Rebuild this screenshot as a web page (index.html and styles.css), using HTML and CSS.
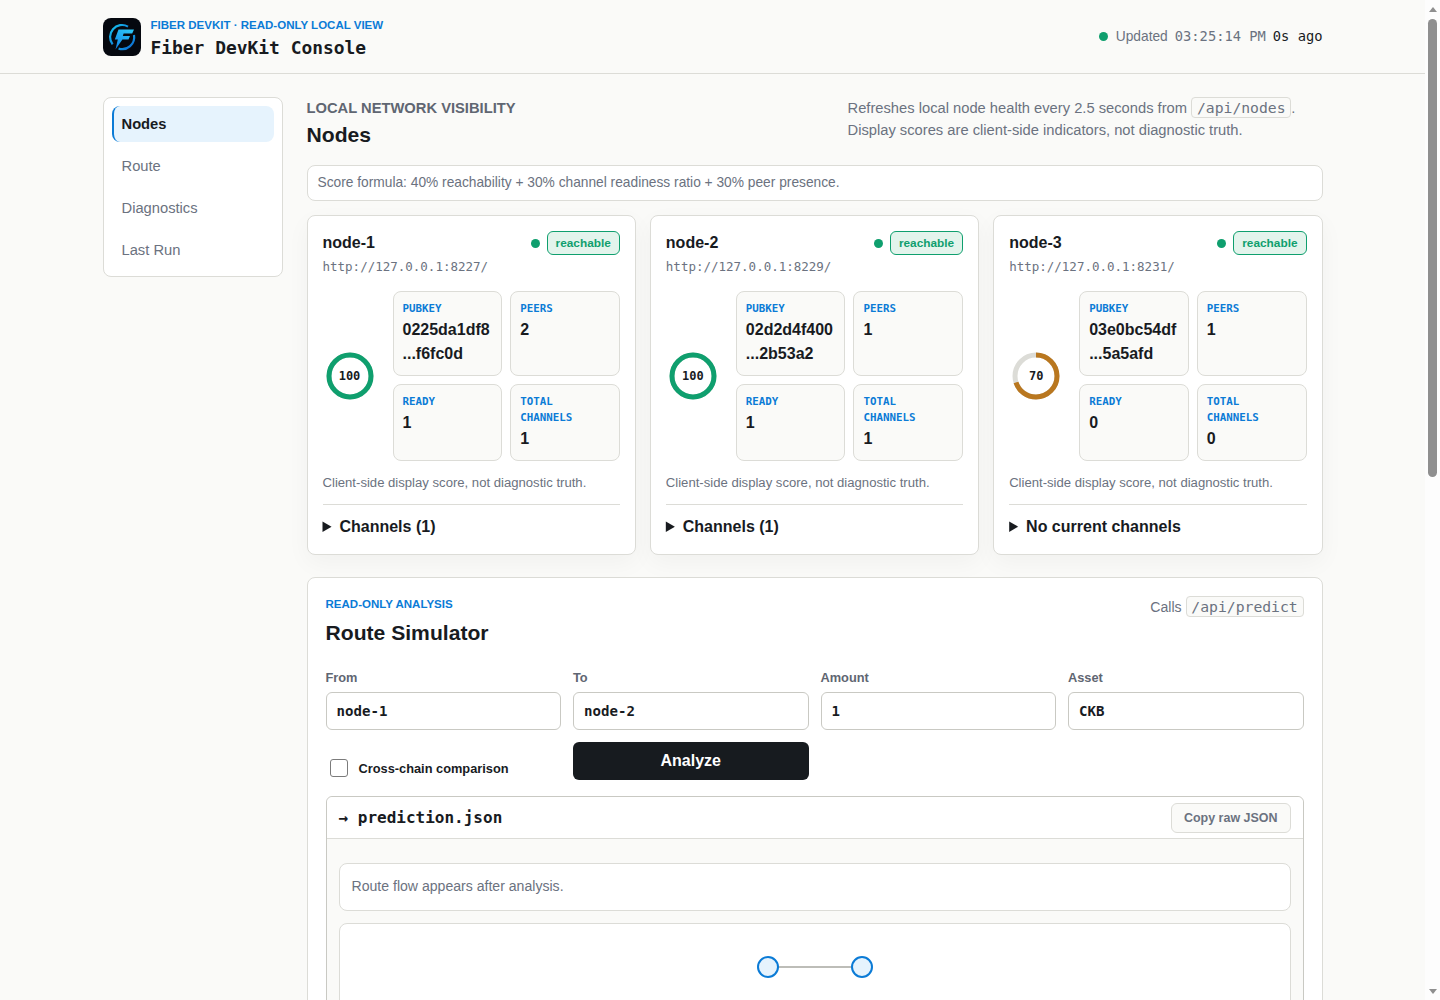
FILE: index.html
```html
<!doctype html>
<html lang="en">
<head>
	<meta charset="utf-8">
	<meta name="viewport" content="width=device-width, initial-scale=1.0"/>
	<title>Fiber DevKit Console</title>
	<link rel="stylesheet" href="styles.css">
</head>
<body>

	<header class="topbar">
		<div class="topbar-inner">
			<div class="brand">
				<svg class="logo" viewBox="0 0 38 38" aria-hidden="true">
					<defs>
						<linearGradient id="ringGrad" x1="0" y1="0" x2="1" y2="1">
							<stop offset="0" stop-color="#18c8f0"/>
							<stop offset="1" stop-color="#0a5fd0"/>
						</linearGradient>
						<linearGradient id="boltGrad" x1="0.7" y1="0" x2="0.2" y2="1">
							<stop offset="0" stop-color="#2cc4f6"/>
							<stop offset="1" stop-color="#0f86ea"/>
						</linearGradient>
					</defs>
					<rect width="38" height="38" rx="8" fill="#05080f"/>
					<path d="M25 8.6A12 12 0 0 0 9.6 26.4" fill="none" stroke="url(#ringGrad)" stroke-width="2.2"/>
					<path d="M31 17A12 12 0 0 1 15.6 30.6" fill="none" stroke="url(#ringGrad)" stroke-width="2.2"/>
					<path d="M15.5 11.5H31L29.2 15.6H20.6L19.8 18H27L25.5 21.5H19.4L12.5 31.5L14.8 21.5H11.8Z" fill="url(#boltGrad)"/>
				</svg>
				<div class="brand-text">
					<div class="eyebrow">Fiber DevKit · Read-only local view</div>
					<div class="brand-title">Fiber DevKit Console</div>
				</div>
			</div>
			<div class="status">
				<span class="dot"></span>
				<span class="status-text">Updated</span>
				<span class="mono status-text">03:25:14 PM</span>
				<span class="mono status-ago">0s ago</span>
			</div>
		</div>
	</header>

	<div class="layout">
		<nav class="sidebar">
			<a class="nav-item active">Nodes</a>
			<a class="nav-item">Route</a>
			<a class="nav-item">Diagnostics</a>
			<a class="nav-item">Last Run</a>
		</nav>

		<main class="content">
			<section class="section-head">
				<div>
					<div class="kicker">Local network visibility</div>
					<h1>Nodes</h1>
				</div>
				<p class="section-desc">Refreshes local node health every 2.5 seconds from <code>/api/nodes</code>.<br>Display scores are client-side indicators, not diagnostic truth.</p>
			</section>

			<div class="formula">Score formula: 40% reachability + 30% channel readiness ratio + 30% peer presence.</div>

			<div class="cards">
				<article class="card">
					<div class="card-head">
						<h2>node-1</h2>
						<div class="card-state"><span class="dot"></span><span class="badge">reachable</span></div>
					</div>
					<div class="url">http://127.0.0.1:8227/</div>
					<div class="card-body">
						<div class="gauge">
							<svg viewBox="0 0 48 48"><circle class="gauge-track" cx="24" cy="24" r="21"/><circle class="gauge-bar" cx="24" cy="24" r="21" pathLength="100" stroke-dasharray="100 100"/></svg>
							<span>100</span>
						</div>
						<div class="stats">
							<div class="stat"><div class="stat-label">PUBKEY</div><div class="stat-value">0225da1df8 ...f6fc0d</div></div>
							<div class="stat"><div class="stat-label">PEERS</div><div class="stat-value">2</div></div>
							<div class="stat"><div class="stat-label">READY</div><div class="stat-value">1</div></div>
							<div class="stat"><div class="stat-label">TOTAL CHANNELS</div><div class="stat-value">1</div></div>
						</div>
					</div>
					<p class="note">Client-side display score, not diagnostic truth.</p>
					<details class="channels"><summary>Channels (1)</summary></details>
				</article>

				<article class="card">
					<div class="card-head">
						<h2>node-2</h2>
						<div class="card-state"><span class="dot"></span><span class="badge">reachable</span></div>
					</div>
					<div class="url">http://127.0.0.1:8229/</div>
					<div class="card-body">
						<div class="gauge">
							<svg viewBox="0 0 48 48"><circle class="gauge-track" cx="24" cy="24" r="21"/><circle class="gauge-bar" cx="24" cy="24" r="21" pathLength="100" stroke-dasharray="100 100"/></svg>
							<span>100</span>
						</div>
						<div class="stats">
							<div class="stat"><div class="stat-label">PUBKEY</div><div class="stat-value">02d2d4f400 ...2b53a2</div></div>
							<div class="stat"><div class="stat-label">PEERS</div><div class="stat-value">1</div></div>
							<div class="stat"><div class="stat-label">READY</div><div class="stat-value">1</div></div>
							<div class="stat"><div class="stat-label">TOTAL CHANNELS</div><div class="stat-value">1</div></div>
						</div>
					</div>
					<p class="note">Client-side display score, not diagnostic truth.</p>
					<details class="channels"><summary>Channels (1)</summary></details>
				</article>

				<article class="card">
					<div class="card-head">
						<h2>node-3</h2>
						<div class="card-state"><span class="dot"></span><span class="badge">reachable</span></div>
					</div>
					<div class="url">http://127.0.0.1:8231/</div>
					<div class="card-body">
						<div class="gauge">
							<svg viewBox="0 0 48 48"><circle class="gauge-track" cx="24" cy="24" r="21"/><circle class="gauge-bar warn" cx="24" cy="24" r="21" pathLength="100" stroke-dasharray="70 100"/></svg>
							<span>70</span>
						</div>
						<div class="stats">
							<div class="stat"><div class="stat-label">PUBKEY</div><div class="stat-value">03e0bc54df ...5a5afd</div></div>
							<div class="stat"><div class="stat-label">PEERS</div><div class="stat-value">1</div></div>
							<div class="stat"><div class="stat-label">READY</div><div class="stat-value">0</div></div>
							<div class="stat"><div class="stat-label">TOTAL CHANNELS</div><div class="stat-value">0</div></div>
						</div>
					</div>
					<p class="note">Client-side display score, not diagnostic truth.</p>
					<details class="channels"><summary>No current channels</summary></details>
				</article>
			</div>

			<section class="panel">
				<div class="panel-head">
					<div>
						<div class="panel-kicker">Read-only analysis</div>
						<h2>Route Simulator</h2>
					</div>
					<div class="panel-calls">Calls <code>/api/predict</code></div>
				</div>

				<div class="form-grid">
					<label class="field"><span>From</span><input type="text" value="node-1"></label>
					<label class="field"><span>To</span><input type="text" value="node-2"></label>
					<label class="field"><span>Amount</span><input type="text" value="1"></label>
					<label class="field"><span>Asset</span><input type="text" value="CKB"></label>
					<label class="check"><input type="checkbox"><span>Cross-chain comparison</span></label>
					<button class="analyze" type="button">Analyze</button>
				</div>

				<div class="result">
					<div class="result-head">
						<div class="result-title">→ prediction.json</div>
						<button class="copy" type="button">Copy raw JSON</button>
					</div>
					<div class="result-body">
						<div class="flow-note">Route flow appears after analysis.</div>
						<div class="flow">
							<svg class="flow-graph" viewBox="0 0 116 24" aria-hidden="true">
								<line x1="20" y1="12" x2="96" y2="12"/>
								<circle cx="11" cy="12" r="10"/>
								<circle cx="105" cy="12" r="10"/>
							</svg>
						</div>
					</div>
				</div>
			</section>
		</main>
	</div>

	<!-- the window's scrollbar, which the headless browser leaves out -->
	<div class="scrollbar" aria-hidden="true">
		<span class="scroll-up"></span>
		<span class="scroll-thumb"></span>
		<span class="scroll-down"></span>
	</div>

</body>
</html>
```

FILE: styles.css
```css
/*----- Reset -----*/

*{
	box-sizing: border-box;
}

html, body{
	padding: 0;
	margin: 0;
}

body{
	padding-right: 15px;
	background: #fafaf8;
	color: #181b1f;
	font-family: "Liberation Sans", Arial, sans-serif;
	font-size: 14.72px;
}

h1, h2, p{
	margin: 0;
}

code, .mono{
	font-family: "DejaVu Sans Mono", monospace;
}

code{
	font-size: 14.72px;
	padding: 1px 4.8px;
	background: #fafaf8;
	border: 1px solid #dcdcd7;
	border-radius: 4px;
}

.dot{
	display: inline-block;
	width: 9px;
	height: 9px;
	border-radius: 50%;
	background: #0f9f6e;
}

/*----- Scrollbar -----*/

.scrollbar{
	display: flex;
	flex-direction: column;
	align-items: center;
	position: fixed;
	top: 0;
	right: 0;
	bottom: 0;
	width: 15px;
	padding: 7px 0 6px;
	background: #fdfdfd;
}

.scroll-up, .scroll-down{
	width: 0;
	height: 0;
	border-left: 4.5px solid transparent;
	border-right: 4.5px solid transparent;
}

.scroll-up{
	border-bottom: 5px solid #8f8f8f;
}

.scroll-down{
	margin-top: auto;
	border-top: 5px solid #8f8f8f;
}

.scroll-thumb{
	width: 9px;
	height: 458px;
	margin-top: 7px;
	background: #8f8f8f;
	border-radius: 5px;
}

/*----- Topbar -----*/

.topbar{
	height: 74px;
	border-bottom: 1px solid #dcdcd7;
}

.topbar-inner{
	display: flex;
	align-items: center;
	justify-content: space-between;
	max-width: 1220px;
	height: 100%;
	margin: 0 auto;
}

.brand{
	display: flex;
	align-items: center;
	gap: 10px;
}

.logo{
	width: 38px;
	height: 38px;
}

.brand-text{
	padding-top: 5px;
}

.eyebrow{
	color: #0b7bd6;
	font-size: 11.52px;
	font-weight: bold;
	line-height: 16px;
	text-transform: uppercase;
}

.brand-title{
	margin-top: 1px;
	font-family: "DejaVu Sans Mono", monospace;
	font-size: 17.92px;
	font-weight: bold;
	line-height: 27px;
}

.status{
	display: flex;
	align-items: center;
	gap: 7px;
	margin-top: -1px;
	font-size: 13.76px;
}

.status .dot{
	margin-right: 1px;
}

.status-text{
	color: #6b7280;
}

.status-ago{
	color: #181b1f;
}

/*----- Layout -----*/

.layout{
	display: flex;
	align-items: flex-start;
	gap: 24px;
	max-width: 1220px;
	margin: 0 auto;
	padding: 23px 0 48px;
}

.sidebar{
	display: flex;
	flex-direction: column;
	gap: 6px;
	flex: 0 0 180px;
	padding: 8px;
	background: #fff;
	border: 1px solid #dcdcd7;
	border-radius: 8px;
}

.nav-item{
	height: 36px;
	padding: 0 8px;
	border-left: 2px solid transparent;
	border-radius: 8px;
	color: #6b7280;
	line-height: 36px;
}

.nav-item.active{
	background: #e6f3fd;
	border-left-color: #0b7bd6;
	color: #181b1f;
	font-weight: bold;
}

.content{
	flex: 1;
	min-width: 0;
}

/*----- Section head -----*/

.section-head{
	display: flex;
	justify-content: space-between;
	height: 68px;
}

.kicker{
	color: #5f6672;
	font-size: 14.72px;
	font-weight: bold;
	line-height: 22px;
	text-transform: uppercase;
}

h1{
	margin-top: 2px;
	font-size: 21.12px;
	line-height: 28px;
}

.section-desc{
	width: 475px;
	color: #6b7280;
	line-height: 22px;
}

.formula{
	height: 36px;
	padding: 0 10px;
	background: #fff;
	border: 1px solid #dcdcd7;
	border-radius: 8px;
	color: #6b7280;
	font-size: 13.76px;
	line-height: 33px;
}

/*----- Node cards -----*/

.cards{
	display: grid;
	grid-template-columns: repeat(3, 1fr);
	gap: 14px;
	margin-top: 14px;
}

.card{
	padding: 15px;
	background: #fff;
	border: 1px solid #dcdcd7;
	border-radius: 8px;
	box-shadow: 0 8px 24px rgba(24, 27, 31, 0.04);
}

.card-head{
	display: flex;
	align-items: center;
	justify-content: space-between;
	height: 24px;
}

.card-head h2{
	font-size: 16px;
}

.card-state{
	display: flex;
	align-items: center;
	gap: 7px;
}

.badge{
	height: 24px;
	padding: 0 8px;
	background: #e3f4ec;
	border: 1px solid #0f9f6e;
	border-radius: 6px;
	color: #0f9f6e;
	font-size: 11.84px;
	font-weight: bold;
	line-height: 22px;
}

.url{
	margin-top: 2px;
	color: #6b7280;
	font-family: "DejaVu Sans Mono", monospace;
	font-size: 12.5px;
	line-height: 20px;
}

.card-body{
	display: grid;
	grid-template-columns: 54px 1fr;
	align-items: center;
	gap: 16px;
	margin-top: 14px;
}

.gauge{
	display: grid;
	place-items: center;
	position: relative;
	width: 48px;
	height: 48px;
	margin: 0 auto;
	font-family: "DejaVu Sans Mono", monospace;
	font-size: 12px;
	font-weight: bold;
}

.gauge svg{
	position: absolute;
	inset: 0;
	transform: rotate(-90deg);
}

.gauge circle{
	fill: none;
	stroke-width: 5;
}

.gauge-track{
	stroke: #dcdcd7;
}

.gauge-bar{
	stroke: #0f9f6e;
}

.gauge-bar.warn{
	stroke: #b9771f;
}

.stats{
	display: grid;
	grid-template-columns: 1fr 1fr;
	gap: 8px;
}

.stat{
	padding: 9px;
	background: #fafaf8;
	border: 1px solid #dcdcd7;
	border-radius: 8px;
}

.stat-label{
	color: #0b7bd6;
	font-family: "DejaVu Sans Mono", monospace;
	font-size: 10.8px;
	font-weight: bold;
	line-height: 16px;
}

.stat-value{
	margin-top: 1px;
	font-size: 16px;
	font-weight: bold;
	line-height: 24px;
}

.note{
	margin-top: 12px;
	color: #6b7280;
	font-size: 13.12px;
	line-height: 20px;
}

.channels{
	margin-top: 11px;
	padding-top: 10px;
	border-top: 1px solid #dcdcd7;
}

.channels summary{
	font-size: 16px;
	font-weight: bold;
	line-height: 24px;
}

/*----- Route simulator -----*/

.panel{
	margin-top: 22px;
	padding: 18px;
	background: #fff;
	border: 1px solid #dcdcd7;
	border-radius: 8px;
}

.panel-head{
	display: flex;
	align-items: flex-start;
	justify-content: space-between;
}

.panel-kicker{
	color: #0b7bd6;
	font-size: 11.52px;
	font-weight: bold;
	line-height: 16px;
	text-transform: uppercase;
}

.panel-head h2{
	margin-top: 7px;
	font-size: 21.12px;
	line-height: 28px;
}

.panel-calls{
	color: #6b7280;
	font-size: 14.08px;
	line-height: 22px;
}

.form-grid{
	display: grid;
	grid-template-columns: repeat(4, 1fr);
	gap: 12px;
	margin-top: 23px;
}

.field span{
	display: block;
	margin-bottom: 6px;
	color: #5f6672;
	font-size: 12.8px;
	font-weight: bold;
	line-height: 16px;
}

.field input{
	display: block;
	width: 100%;
	height: 38px;
	padding: 0 10px;
	background: #fff;
	border: 1px solid #c9c9c3;
	border-radius: 6px;
	color: #181b1f;
	font-family: "DejaVu Sans Mono", monospace;
	font-size: 14.08px;
	font-weight: bold;
}

.check{
	display: flex;
	align-items: center;
	gap: 11px;
	padding: 14px 4px 0;
	font-size: 12.8px;
	font-weight: bold;
}

.check input{
	appearance: none;
	width: 18px;
	height: 18px;
	margin: 0;
	background: #fff;
	border: 1px solid #7b7b7b;
	border-radius: 3px;
}

.analyze{
	height: 38px;
	background: #171b1f;
	border: 0;
	border-radius: 6px;
	color: #fff;
	font-family: inherit;
	font-size: 16px;
	font-weight: bold;
}

.result{
	margin-top: 16px;
	border: 1px solid #c9c9c3;
	border-radius: 6px;
}

.result-head{
	display: flex;
	align-items: center;
	justify-content: space-between;
	height: 42px;
	padding: 0 12px;
	background: #fff;
	border-bottom: 1px solid #dcdcd7;
	border-radius: 6px 6px 0 0;
}

.result-title{
	font-family: "DejaVu Sans Mono", monospace;
	font-size: 16px;
	font-weight: bold;
}

.copy{
	height: 30px;
	padding: 0 12px;
	background: #fafaf8;
	border: 1px solid #dcdcd7;
	border-radius: 6px;
	color: #6b7280;
	font-family: inherit;
	font-size: 12.48px;
	font-weight: bold;
}

.result-body{
	padding: 24px 12px 12px;
	background: #fafaf8;
}

.flow-note{
	height: 48px;
	padding: 0 12px;
	background: #fff;
	border: 1px solid #dcdcd7;
	border-radius: 8px;
	color: #6b7280;
	font-size: 14.08px;
	line-height: 44px;
}

.flow{
	min-height: 1050px;
	margin-top: 12px;
	padding-top: 31px;
	background: #fff;
	border: 1px solid #dcdcd7;
	border-radius: 8px;
}

.flow-graph{
	display: block;
	width: 116px;
	height: 24px;
	margin: 0 auto;
}

.flow-graph line{
	stroke: #bdbdb8;
	stroke-width: 2;
}

.flow-graph circle{
	fill: #e6f3fd;
	stroke: #0b7bd6;
	stroke-width: 2;
}
```
